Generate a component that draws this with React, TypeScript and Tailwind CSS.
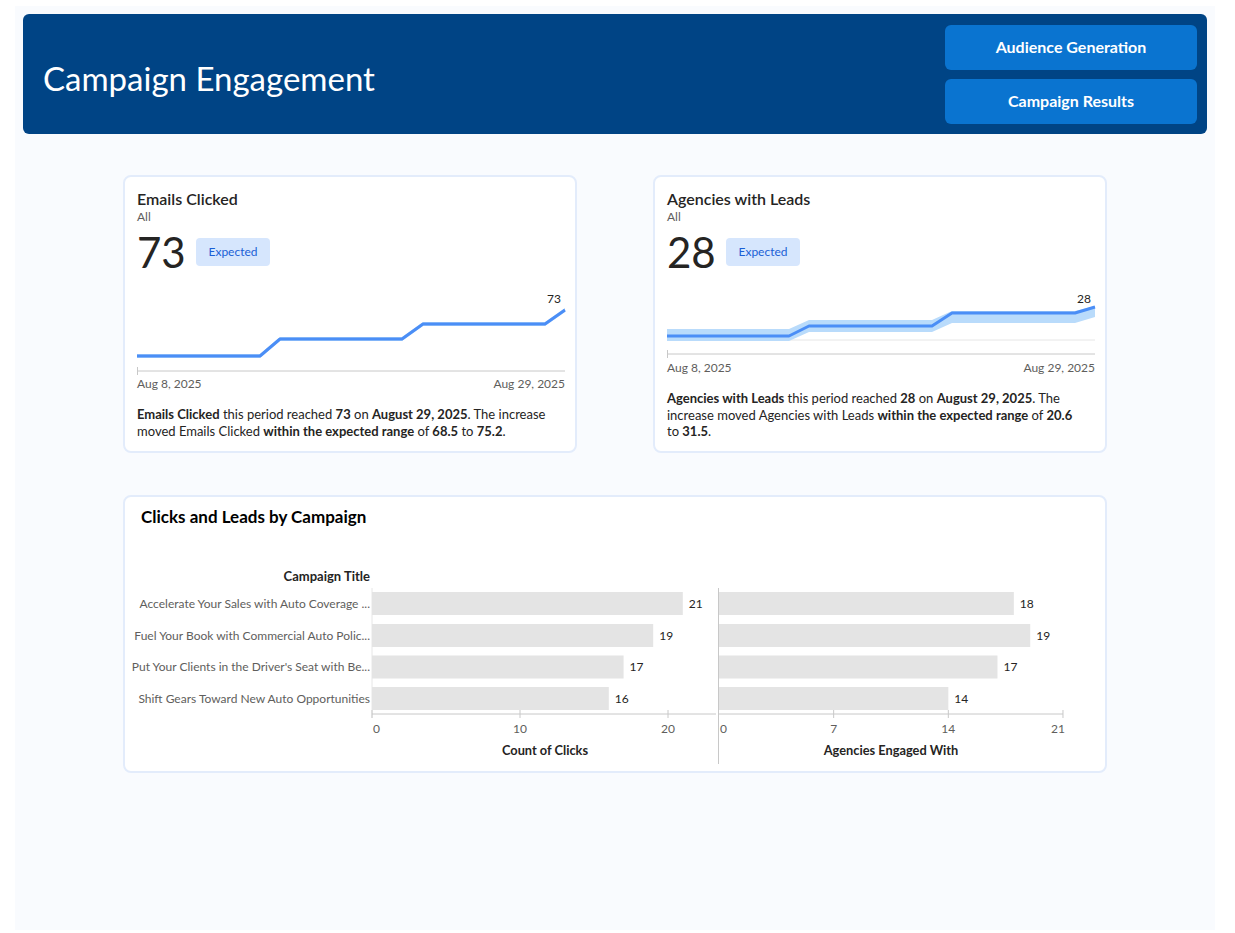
const FONT = '"Segoe UI", Lato, "Noto Sans", sans-serif';

type Pt = [number, number];

const toPath = (pts: Pt[]) => pts.map((p, i) => `${i ? 'L' : 'M'}${p[0]} ${p[1]}`).join(' ');

const bandPath = (upper: Pt[], lower: Pt[]) =>
  toPath(upper) + ' ' + [...lower].reverse().map((p) => `L${p[0]} ${p[1]}`).join(' ') + ' Z';

interface KpiProps {
  title: string;
  value: string;
  line: Pt[];
  upper: Pt[];
  lower: Pt[];
  height: number;
  axisY: number;
  gridY?: number;
  children: React.ReactNode;
}

function KpiCard({ title, value, line, upper, lower, height, axisY, gridY, children }: KpiProps) {
  const last = line[line.length - 1];
  return (
    <div className="w-[454px] h-[278px] bg-white border-2 border-[#e3ecfb] rounded-[8px] pt-[12px] pl-[12px] pr-[6px]">
      <div className="text-[16px] leading-[20px] font-semibold text-[#252423]">{title}</div>
      <div className="text-[12px] leading-[16px] text-[#605e5c]">All</div>
      <div className="flex items-center mt-[7px] h-[40px]">
        <div className="text-[42px] leading-[40px] text-[#252423] w-[59px]">{value}</div>
        <div className="w-[74px] h-[28px] rounded-[4px] bg-[#d6e6fd] text-[#1a5fd6] text-[12px] flex items-center justify-center">
          Expected
        </div>
      </div>
      <svg width={428} height={height} className="block mt-[18px] overflow-visible">
        {gridY !== undefined && <line x1={0} x2={428} y1={gridY} y2={gridY} stroke="#e6e6e6" strokeWidth={1} />}
        <path d={bandPath(upper, lower)} fill="#b9dbfb" />
        <path d={toPath(line)} fill="none" stroke="#4b8ef6" strokeWidth={3} strokeLinejoin="round" />
        <line x1={0} x2={428} y1={axisY} y2={axisY} stroke="#c8c8c8" strokeWidth={1} />
        <line x1={0.5} x2={0.5} y1={axisY - 4} y2={axisY + 4} stroke="#c8c8c8" strokeWidth={1} />
        <text x={last[0] - 4} y={13} textAnchor="end" fontSize={12} fill="#252423" style={{ fontFamily: FONT }}>
          {value}
        </text>
      </svg>
      <div className="w-[428px] flex justify-between text-[12px] leading-[14px] text-[#605e5c] mt-[3px]">
        <span>Aug 8, 2025</span>
        <span>Aug 29, 2025</span>
      </div>
      <p className="w-[414px] text-[13px] leading-[16.5px] text-[#252423] mt-[15px]">{children}</p>
    </div>
  );
}

const rows = [
  { title: 'Accelerate Your Sales with Auto Coverage ...', clicks: 21, agencies: 18 },
  { title: 'Fuel Your Book with Commercial Auto Polic...', clicks: 19, agencies: 19 },
  { title: "Put Your Clients in the Driver's Seat with Be...", clicks: 17, agencies: 17 },
  { title: 'Shift Gears Toward New Auto Opportunities', clicks: 16, agencies: 14 },
];

function BarChart() {
  // local coords: x = page x - 124, y = page y - 540
  const lx0 = 248;
  const lScale = 14.8;
  const rx0 = 595;
  const rScale = 16.38;
  const tops = [52, 84, 115.5, 147];
  const axisY = 174;
  const label = { fontSize: 12, fill: '#605e5c', style: { fontFamily: FONT } };
  const bold = { fontSize: 12.8, fontWeight: 700, fill: '#252423', style: { fontFamily: FONT } };
  return (
    <svg width={982} height={230} className="block">
      <text x={246} y={41} textAnchor="end" {...bold} fontSize={13}>
        Campaign Title
      </text>
      <line x1={lx0} x2={lx0} y1={48} y2={178} stroke="#e6e6e6" />
      {rows.map((r, i) => {
        const cy = tops[i] + 11.5;
        const lw = r.clicks * lScale;
        const rw = r.agencies * rScale;
        return (
          <g key={r.title}>
            <text x={246} y={cy + 4} textAnchor="end" {...label}>
              {r.title}
            </text>
            <rect x={lx0} y={tops[i]} width={lw} height={23} fill="#e4e4e4" />
            <text x={lx0 + lw + 6} y={cy + 4} fontSize={12} fill="#252423" style={{ fontFamily: FONT }}>
              {r.clicks}
            </text>
            <rect x={rx0} y={tops[i]} width={rw} height={23} fill="#e4e4e4" />
            <text x={rx0 + rw + 6} y={cy + 4} fontSize={12} fill="#252423" style={{ fontFamily: FONT }}>
              {r.agencies}
            </text>
          </g>
        );
      })}
      {/* left axis */}
      <line x1={lx0} x2={592} y1={axisY} y2={axisY} stroke="#c8c8c8" />
      {[0, 10, 20].map((v) => (
        <line key={v} x1={lx0 + v * lScale} x2={lx0 + v * lScale} y1={axisY - 4} y2={axisY + 4} stroke="#c8c8c8" />
      ))}
      <text x={lx0 + 1} y={193} {...label}>0</text>
      <text x={lx0 + 10 * lScale} y={193} textAnchor="middle" {...label}>10</text>
      <text x={lx0 + 20 * lScale} y={193} textAnchor="middle" {...label}>20</text>
      <text x={421} y={215} textAnchor="middle" {...bold}>
        Count of Clicks
      </text>
      {/* separator */}
      <line x1={594.5} x2={594.5} y1={48} y2={224} stroke="#c8c8c8" />
      {/* right axis */}
      <line x1={rx0} x2={rx0 + 21 * rScale} y1={axisY} y2={axisY} stroke="#c8c8c8" />
      {[7, 14, 21].map((v) => (
        <line key={v} x1={rx0 + v * rScale} x2={rx0 + v * rScale} y1={axisY - 4} y2={axisY + 4} stroke="#c8c8c8" />
      ))}
      <text x={rx0 + 1} y={193} {...label}>0</text>
      <text x={rx0 + 7 * rScale} y={193} textAnchor="middle" {...label}>7</text>
      <text x={rx0 + 14 * rScale} y={193} textAnchor="middle" {...label}>14</text>
      <text x={rx0 + 21 * rScale - 5} y={193} textAnchor="middle" {...label}>21</text>
      <text x={767} y={215} textAnchor="middle" {...bold}>
        Agencies Engaged With
      </text>
    </svg>
  );
}

export default function App() {
  return (
    <div className="bg-white min-h-[933px] pt-[6px] pl-[15px]" style={{ fontFamily: FONT }}>
      <div className="w-[1200px] h-[924px] bg-[#f9fbfe] pt-[8px] px-[8px]">
        <header className="h-[120px] bg-[#004485] rounded-[6px] flex items-center justify-between pl-[20px] pr-[10px]">
          <h1 className="text-[33px] text-white leading-none pt-[9px]">Campaign Engagement</h1>
          <div className="flex flex-col gap-[9px]">
            <button className="w-[252px] h-[45px] rounded-[6px] bg-[#0a74d0] text-white text-[16px] font-bold">
              Audience Generation
            </button>
            <button className="w-[252px] h-[45px] rounded-[6px] bg-[#0a74d0] text-white text-[16px] font-bold">
              Campaign Results
            </button>
          </div>
        </header>

        <div className="w-[984px] mx-auto mt-[41px]">
          <div className="flex justify-between">
            <KpiCard
              title="Emails Clicked"
              value="73"
              height={84}
              axisY={81}
              line={[[0, 66], [123, 66], [143, 49], [265, 49], [286, 34], [408, 34], [428, 20]]}
              upper={[[0, 64], [123, 64], [143, 47], [265, 47], [286, 32], [408, 32], [428, 18]]}
              lower={[[0, 68], [123, 68], [143, 51], [265, 51], [286, 36], [408, 36], [428, 22]]}
            >
              <b>Emails Clicked</b> this period reached <b>73</b> on <b>August 29, 2025</b>. The increase moved Emails
              Clicked <b>within the expected range</b> of <b>68.5</b> to <b>75.2</b>.
            </KpiCard>
            <KpiCard
              title="Agencies with Leads"
              value="28"
              height={68}
              axisY={64}
              gridY={50}
              line={[[0, 46], [122, 46], [142, 36], [265, 36], [285, 23], [408, 23], [428, 17]]}
              upper={[[0, 39], [122, 39], [142, 30], [265, 30], [285, 21], [408, 21], [428, 16]]}
              lower={[[0, 51], [122, 51], [142, 42], [265, 42], [285, 33], [408, 33], [428, 27]]}
            >
              <b>Agencies with Leads</b> this period reached <b>28</b> on <b>August 29, 2025</b>. The increase moved
              Agencies with Leads <b>within the expected range</b> of <b>20.6</b> to <b>31.5</b>.
            </KpiCard>
          </div>

          <section className="mt-[42px] h-[278px] bg-white border-2 border-[#e3ecfb] rounded-[8px]">
            <h2 className="pt-[10px] pl-[16px] text-[17px] leading-[20px] font-bold text-black">
              Clicks and Leads by Campaign
            </h2>
            <div className="mt-[13px] -ml-[1px]">
              <BarChart />
            </div>
          </section>
        </div>
      </div>
    </div>
  );
}
